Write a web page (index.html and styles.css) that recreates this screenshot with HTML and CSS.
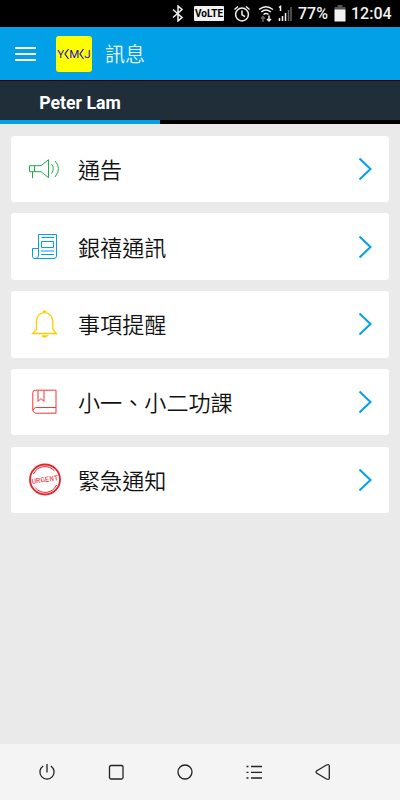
FILE: index.html
```html
<!DOCTYPE html>
<html lang="zh-HK">
<head>
    <meta charset="UTF-8">
    <meta name="viewport" content="width=device-width, initial-scale=1.0">
    <title>訊息</title>
    <link rel="stylesheet" href="styles.css">
</head>
<body>
    <div class="status">
        <svg class="bluetooth" width="12" height="17" viewBox="0 0 12 17"><path d="M1 4.5l9 8-4 3.5V1l4 3.5-9 8"/></svg>
        <span class="volte">VoLTE</span>
        <svg class="alarm" width="18" height="18" viewBox="0 0 18 18"><circle cx="9" cy="9.5" r="6.4"/><path d="M9 5.5v4.3l3 1.8M1.5 4.5L5 1.5M16.500 4.500L13 1.500"/></svg>
        <svg class="wifi" width="16" height="18" viewBox="0 0 16 18"><path d="M1 4.500q7-5.500 14 0M3.200 7q4.800-3.800 9.600 0M5.500 9.500q2.500-2 5 0"/><path class="dim" d="M5 17v-5M3 13.500l2-2 2 2"/><path d="M11 10.500v5M9 14l2 2 2-2"/></svg>
        <svg class="signal" width="15" height="17" viewBox="0 0 15 17"><path d="M1 2.500l1.500-1v4.500M1.500 13v3M4.500 11v5"/><path d="M7.500 8v8"/><path class="dim" d="M10.500 5v11M13 2v14"/></svg>
        <span class="percent">77%</span>
        <svg class="battery" width="12" height="17" viewBox="0 0 12 17"><path class="empty" d="M3.500 0h5v2H11.500v3H.5V2h3z"/><path class="full" d="M.5 4.500h11V16.500H.5z"/></svg>
        <span class="time">12:04</span>
    </div>

    <header class="header">
        <div class="menu"><i></i><i></i><i></i></div>
        <div class="logo"><span>Y</span><svg width="5" height="12" viewBox="0 0 5 12"><path d="M4.500 1L1 6l3.500 5"/></svg><span>M</span><svg width="5" height="12" viewBox="0 0 5 12"><path d="M4.500 1L1 6l3.500 5"/></svg><span>J</span></div>
        <h1>訊息</h1>
    </header>
    <div class="tabs"><div class="tab">Peter Lam</div></div>

    <main class="list">
        <a class="item">
            <svg class="icon green" viewBox="0 0 36 36"><path d="M2.500 14.700h11.500l7.500-6v18l-7.500-6H2.500zM7.500 14.700v6M5.500 20.700v6.500M24.500 13q3.500 4.500 0 9.500M28 10q7 7.500 0 16"/></svg>
            <span class="name">通告</span>
            <svg class="arrow" viewBox="0 0 14 24"><path d="M1.500 1.500l11 10.500-11 10.500"/></svg>
        </a>
        <a class="item">
            <svg class="icon blue" viewBox="0 0 36 36"><path d="M11.500 26V5.500h18V27q0 2.500-2.500 2.500H8M11.500 19.500h-6V27q0 2.500 2.500 2.500h1q2.500 0 2.500-3.500M14.500 8.500h12.500M14.500 12.500h12v6h-12zM14 22h13M14 25.500h13"/></svg>
            <span class="name">銀禧通訊</span>
            <svg class="arrow" viewBox="0 0 14 24"><path d="M1.500 1.500l11 10.500-11 10.500"/></svg>
        </a>
        <a class="item">
            <svg class="icon yellow" viewBox="0 0 36 36"><path d="M9.500 23.500v-8c0-5 3.500-9 8-9s8.300 4 8.300 9v8l3.700 4H5.500zM16 6q1.500-2 3 0M15 30h5q-2.500 2-5 0"/></svg>
            <span class="name">事項提醒</span>
            <svg class="arrow" viewBox="0 0 14 24"><path d="M1.500 1.500l11 10.500-11 10.500"/></svg>
        </a>
        <a class="item">
            <svg class="icon red" viewBox="0 0 36 36"><path d="M5.800 26.500V8.500q0-2.300 2.500-2.300H29V29.200H8.500q-5.200-2.700 0-5.700H29M11 6.500v11l3-3 3 3v-11"/></svg>
            <span class="name">小一、小二功課</span>
            <svg class="arrow" viewBox="0 0 14 24"><path d="M1.500 1.500l11 10.500-11 10.500"/></svg>
        </a>
        <a class="item">
            <svg class="icon stamp" viewBox="0 0 36 36"><circle class="outer" cx="18" cy="17.500" r="15"/><path d="M6.500 12a12.500 12.500 0 0 1 21-3M29.500 23a12.500 12.500 0 0 1-21 3"/><text x="18" y="20" text-anchor="middle" textLength="27" lengthAdjust="spacingAndGlyphs" transform="rotate(-8 18 18)">URGENT</text></svg>
            <span class="name">緊急通知</span>
            <svg class="arrow" viewBox="0 0 14 24"><path d="M1.500 1.500l11 10.500-11 10.500"/></svg>
        </a>
    </main>

    <nav class="navbar">
        <svg viewBox="0 0 18 18"><path d="M9 1v8.500M5.200 3a7.100 7.100 0 1 0 7.600 0"/></svg>
        <svg viewBox="0 0 18 18"><rect x="2.500" y="2.500" width="13.500" height="13.500" rx="1.500"/></svg>
        <svg viewBox="0 0 18 18"><circle cx="9" cy="9" r="7"/></svg>
        <svg viewBox="0 0 18 18"><path d="M6 3.500h11M6 9.300h11M6 15h11M1.500 3.500h2M1.500 9.300h2M1.500 15h2"/></svg>
        <svg viewBox="0 0 18 18"><path d="M2.500 8q-1 1 0 2l10 6q2.800 1 2.800-1V3q0-2-2.800-1z"/></svg>
    </nav>
</body>
</html>
```
FILE: styles.css
```css
* {
    margin: 0;
    padding: 0;
    box-sizing: border-box;
}

body {
    display: flex;
    flex-direction: column;
    height: 800px;
    overflow: hidden;
    background: #eaeaea;
    font-family: Roboto, "Noto Sans CJK TC", sans-serif;
}

svg {
    display: block;
    flex: none;
    fill: none;
}

/* status bar */
.status {
    display: flex;
    align-items: center;
    height: 27px;
    padding-left: 172px;
    background: #000;
    color: #f2f2f2;
    font-size: 16px;
    font-weight: 500;
    white-space: nowrap;
}

.status svg {
    stroke: #f2f2f2;
    stroke-width: 1.5;
}

.status .dim {
    stroke: #666;
}

.volte {
    width: 30px;
    height: 15px;
    margin: 0 9px 0 10px;
    border-radius: 1px;
    background: #f2f2f2;
    color: #000;
    font-size: 10px;
    font-weight: bold;
    line-height: 15px;
    text-align: center;
}

.wifi {
    margin-left: 7px;
}

.signal {
    margin: 0 5px 0 4px;
}

.percent {
    width: 29px;
}

.status .battery {
    margin: 0 5px 0 7px;
    stroke: none;
}

.empty {
    fill: #555;
}

.full {
    fill: #f2f2f2;
}

/* header */
.header {
    display: flex;
    align-items: center;
    height: 53px;
    padding-left: 15px;
    background: #02a0e6;
}

.menu {
    display: flex;
    flex-direction: column;
    gap: 4px;
    width: 21px;
}

.menu i {
    height: 2px;
    background: #fff;
}

.logo {
    display: flex;
    align-items: center;
    justify-content: center;
    width: 36px;
    height: 36px;
    margin: 0 13px 0 20px;
    border-radius: 3px;
    background: #ff0;
    color: #1a10d0;
    font-size: 11.5px;
    line-height: 36px;
}

.logo svg {
    stroke: #1a10d0;
    stroke-width: 1.2;
}

.header h1 {
    color: #e9f6fd;
    font-size: 20px;
    font-weight: 350;
}

.tabs {
    height: 44px;
    border-top: 1px solid #000;
    border-bottom: 4px solid #000;
    background: #1f2e38;
}

.tab {
    width: 160px;
    height: 43px;
    border-bottom: 4px solid #02a0e6;
    color: #fff;
    font-size: 17.7px;
    font-weight: bold;
    line-height: 44px;
    text-align: center;
}

/* message list */
.list {
    display: flex;
    flex: 1;
    flex-direction: column;
    gap: 11.25px;
    padding: 11.7px 11px 0;
}

.item {
    display: flex;
    align-items: center;
    height: 66.5px;
    padding: 0 17px 0 16px;
    border-radius: 3px;
    background: #fff;
}

.icon {
    width: 36px;
    height: 36px;
    stroke-width: 1;
}

.green {
    stroke: #22ab4b;
}

.blue {
    stroke: #02a0e6;
}

.yellow {
    stroke: #fc0;
    stroke-width: 1.3;
}

.red {
    stroke: #f33;
}

.stamp {
    stroke: #e8202a;
}

.stamp .outer {
    stroke-width: 1.8;
}

.stamp text {
    fill: #e8202a;
    stroke: none;
    font-family: "Liberation Mono", monospace;
    font-size: 7.5px;
}

.name {
    flex: 1;
    margin-left: 15px;
    padding-top: 2px;
    color: #111;
    font-size: 22.1px;
    font-weight: 350;
    line-height: 32px;
}

.arrow {
    width: 14px;
    height: 24px;
    stroke: #02a0e6;
    stroke-width: 2;
}

/* navigation keys */
.navbar {
    display: flex;
    gap: 51px;
    height: 56px;
    padding: 19px 0 0 38px;
    background: #f4f4f4;
}

.navbar svg {
    width: 18px;
    height: 18px;
    stroke: #222;
    stroke-width: 1.3;
}
```
